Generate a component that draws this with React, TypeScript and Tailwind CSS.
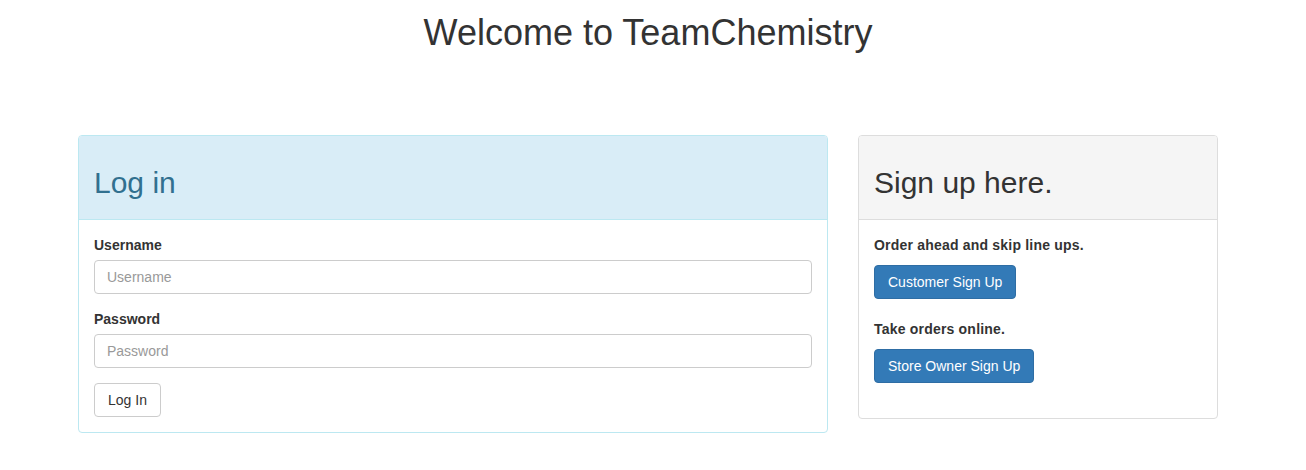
const font = { fontFamily: '"Liberation Sans", Arial, sans-serif' };

const LoginPanel = () => {
  return (
    <div className="w-[750px] shrink-0 rounded-[4px] border border-[#bce8f1] bg-white">
      <div className="rounded-t-[3px] border-b border-[#bce8f1] bg-[#d9edf7] px-[15px] py-[10px]">
        <h2 className="mt-[20px] mb-[10px] text-[30px] leading-[33px] text-[#31708f]">
          Log in
        </h2>
      </div>
      <div className="p-[15px]">
        <div className="mb-[15px]">
          <label className="mb-[5px] block text-[14px] font-bold leading-[20px]">
            Username
          </label>
          <input
            type="text"
            placeholder="Username"
            className="block h-[34px] w-full rounded-[4px] border border-[#ccc] px-[12px] py-[6px] text-[14px] leading-[20px] text-[#555] placeholder:text-[#999] outline-none"
          />
        </div>
        <div className="mb-[15px]">
          <label className="mb-[5px] block text-[14px] font-bold leading-[20px]">
            Password
          </label>
          <input
            type="password"
            placeholder="Password"
            className="block h-[34px] w-full rounded-[4px] border border-[#ccc] px-[12px] py-[6px] text-[14px] leading-[20px] text-[#555] placeholder:text-[#999] outline-none"
          />
        </div>
        <button
          type="button"
          className="block h-[34px] rounded-[4px] border border-[#ccc] bg-white px-[13px] text-[14px] leading-[20px] text-[#333]"
        >
          Log In
        </button>
      </div>
    </div>
  );
};

const SignupPanel = () => {
  return (
    <div className="w-[360px] shrink-0 self-start rounded-[4px] border border-[#ddd] bg-white">
      <div className="rounded-t-[3px] border-b border-[#ddd] bg-[#f5f5f5] px-[15px] py-[10px]">
        <h2 className="mt-[20px] mb-[10px] text-[30px] leading-[33px] text-[#333]">
          Sign up here.
        </h2>
      </div>
      <div className="px-[15px] pt-[15px] pb-[35px]">
        <p className="mb-[10px] text-[14px] font-bold leading-[20px] tracking-[0.2px]">
          Order ahead and skip line ups.
        </p>
        <button
          type="button"
          className="block h-[34px] rounded-[4px] border border-[#2e6da4] bg-[#337ab7] px-[13px] text-[14px] leading-[20px] text-white"
        >
          Customer Sign Up
        </button>
        <p className="mt-[20px] mb-[10px] text-[14px] font-bold leading-[20px] tracking-[0.2px]">
          Take orders online.
        </p>
        <button
          type="button"
          className="block h-[34px] rounded-[4px] border border-[#2e6da4] bg-[#337ab7] px-[13px] text-[14px] leading-[20px] text-white"
        >
          Store Owner Sign Up
        </button>
      </div>
    </div>
  );
};

export default function App() {
  return (
    <div className="min-h-[470px] bg-white text-[#333]" style={font}>
      <div className="ml-[63px] w-[1170px] px-[15px]">
        <h1 className="mt-[13px] text-center text-[36px] leading-[40px] font-normal">
          Welcome to TeamChemistry
        </h1>
        <div className="mt-[82px] flex gap-[30px]">
          <LoginPanel />
          <SignupPanel />
        </div>
      </div>
    </div>
  );
}
